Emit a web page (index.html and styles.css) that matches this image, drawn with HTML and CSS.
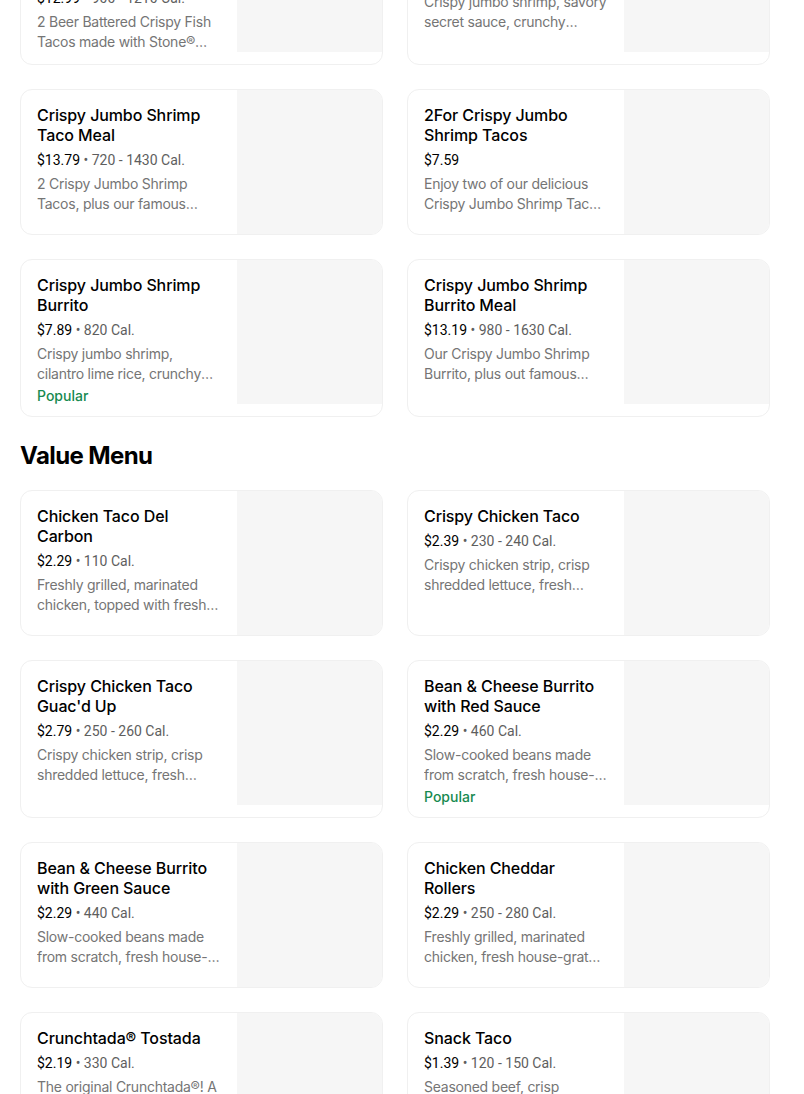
FILE: index.html
```html
<!DOCTYPE html>
<html lang="en">
<head>
<meta charset="utf-8">
<title>Menu</title>
<link rel="stylesheet" href="styles.css">
</head>
<body>
<main class="menu">
  <section class="section section-first">
    <div class="grid">
      <article class="card">
        <div class="info">
          <h3 class="title">2 Beer Battered Crispy Fish Tacos Meal with Stone® Beer</h3>
          <div class="meta"><span class="price">$12.99</span> • 900 - 1210 Cal.</div>
          <p class="desc">2 Beer Battered Crispy Fish Tacos made with Stone® Buenaveza Salt &amp; Lime Lager, plus chips.</p>
        </div>
        <div class="thumb"></div>
      </article>
      <article class="card">
        <div class="info">
          <h3 class="title">Crispy Jumbo Shrimp Taco</h3>
          <div class="meta"><span class="price">$3.79</span> • 360 Cal.</div>
          <p class="desc">Crispy jumbo shrimp, savory secret sauce, crunchy cabbage, fresh pico.</p>
        </div>
        <div class="thumb"></div>
      </article>
      <article class="card">
        <div class="info">
          <h3 class="title">Crispy Jumbo Shrimp Taco Meal</h3>
          <div class="meta"><span class="price">$13.79</span> • 720 - 1430 Cal.</div>
          <p class="desc">2 Crispy Jumbo Shrimp Tacos, plus our famous Chips&nbsp;and&nbsp;Guacamole and a regular drink.</p>
        </div>
        <div class="thumb"></div>
      </article>
      <article class="card">
        <div class="info">
          <h3 class="title">2For Crispy Jumbo Shrimp Tacos</h3>
          <div class="meta"><span class="price">$7.59</span></div>
          <p class="desc">Enjoy two of our delicious Crispy Jumbo Shrimp Tacos for one great price.</p>
        </div>
        <div class="thumb"></div>
      </article>
      <article class="card">
        <div class="info">
          <h3 class="title">Crispy Jumbo Shrimp Burrito</h3>
          <div class="meta"><span class="price">$7.89</span> • 820 Cal.</div>
          <p class="desc">Crispy jumbo shrimp, cilantro lime rice, crunchy cabbage and secret sauce.</p>
          <div class="badge">Popular</div>
        </div>
        <div class="thumb"></div>
      </article>
      <article class="card">
        <div class="info">
          <h3 class="title">Crispy Jumbo Shrimp Burrito Meal</h3>
          <div class="meta"><span class="price">$13.19</span> • 980 - 1630 Cal.</div>
          <p class="desc">Our Crispy Jumbo Shrimp Burrito, plus out famous Chips&nbsp;and&nbsp;Guacamole and a regular drink.</p>
        </div>
        <div class="thumb"></div>
      </article>
    </div>
  </section>

  <section class="section">
    <h2 class="section-title">Value Menu</h2>
    <div class="grid">
      <article class="card">
        <div class="info">
          <h3 class="title">Chicken Taco Del Carbon</h3>
          <div class="meta"><span class="price">$2.29</span> • 110 Cal.</div>
          <p class="desc">Freshly grilled, marinated chicken, topped with fresh pico de gallo in a warm tortilla.</p>
        </div>
        <div class="thumb"></div>
      </article>
      <article class="card">
        <div class="info">
          <h3 class="title">Crispy Chicken Taco</h3>
          <div class="meta"><span class="price">$2.39</span> • 230 - 240 Cal.</div>
          <p class="desc">Crispy chicken strip, crisp shredded lettuce, fresh pico&nbsp;de&nbsp;gallo and creamy sauce.</p>
        </div>
        <div class="thumb"></div>
      </article>
      <article class="card">
        <div class="info">
          <h3 class="title">Crispy Chicken Taco Guac'd Up</h3>
          <div class="meta"><span class="price">$2.79</span> • 250 - 260 Cal.</div>
          <p class="desc">Crispy chicken strip, crisp shredded lettuce, fresh guacamole and creamy sauce.</p>
        </div>
        <div class="thumb"></div>
      </article>
      <article class="card">
        <div class="info">
          <h3 class="title">Bean &amp; Cheese Burrito with Red Sauce</h3>
          <div class="meta"><span class="price">$2.29</span> • 460 Cal.</div>
          <p class="desc">Slow-cooked beans made from scratch, fresh house-grated cheese and red sauce.</p>
          <div class="badge">Popular</div>
        </div>
        <div class="thumb"></div>
      </article>
      <article class="card">
        <div class="info">
          <h3 class="title">Bean &amp; Cheese Burrito with Green Sauce</h3>
          <div class="meta"><span class="price">$2.29</span> • 440 Cal.</div>
          <p class="desc">Slow-cooked beans made from scratch, fresh house-grated cheese and green sauce.</p>
        </div>
        <div class="thumb"></div>
      </article>
      <article class="card">
        <div class="info">
          <h3 class="title">Chicken Cheddar Rollers</h3>
          <div class="meta"><span class="price">$2.29</span> • 250 - 280 Cal.</div>
          <p class="desc">Freshly grilled, marinated chicken, fresh house-grated cheddar rolled in a tortilla.</p>
        </div>
        <div class="thumb"></div>
      </article>
      <article class="card">
        <div class="info">
          <h3 class="title">Crunchtada® Tostada</h3>
          <div class="meta"><span class="price">$2.19</span> • 330 Cal.</div>
          <p class="desc">The original Crunchtada®! A crispy tostada shell topped with beans, cheese and lettuce.</p>
        </div>
        <div class="thumb"></div>
      </article>
      <article class="card">
        <div class="info">
          <h3 class="title">Snack Taco</h3>
          <div class="meta"><span class="price">$1.39</span> • 120 - 150 Cal.</div>
          <p class="desc">Seasoned beef, crisp shredded lettuce and cheese in a corn tortilla.</p>
        </div>
        <div class="thumb"></div>
      </article>
    </div>
  </section>
</main>
</body>
</html>
```

FILE: styles.css
```css
* { box-sizing: border-box; }

html, body {
  margin: 0;
  padding: 0;
  background: #ffffff;
}

body {
  font-family: Inter, "Liberation Sans", Arial, sans-serif;
  color: #000000;
  -webkit-font-smoothing: antialiased;
}

.menu {
  padding: 0 20px;
  margin-top: -93px;
}

.section-title {
  margin: 23px 0 18px;
  font-family: Inter, "Liberation Sans", sans-serif;
  font-size: 24px;
  line-height: 32px;
  font-weight: 700;
  letter-spacing: -0.6px;
  color: #000;
}

.grid {
  display: grid;
  grid-template-columns: 363px 363px;
  column-gap: 24px;
  row-gap: 24px;
}

.card {
  display: flex;
  align-items: flex-start;
  border: 1px solid #f0f0f0;
  border-radius: 12px;
  overflow: hidden;
  background: #fff;
}

.info {
  flex: 0 0 216px;
  padding: 15px 16px 12px;
  min-width: 0;
}

.title {
  margin: 0;
  font-size: 16px;
  line-height: 20px;
  font-weight: 500;
  letter-spacing: -0.1px;
  color: #000;
}

.meta {
  margin-top: 5px;
  font-family: Roboto, "Liberation Sans", sans-serif;
  font-size: 14px;
  line-height: 20px;
  color: #5e5e5e;
}

.price {
  color: #000;
}

.desc {
  margin: 4px 0 0;
  font-size: 14px;
  line-height: 20px;
  letter-spacing: -0.25px;
  color: #757575;
  display: -webkit-box;
  -webkit-line-clamp: 2;
  -webkit-box-orient: vertical;
  overflow: hidden;
}

.badge {
  margin-top: 4px;
  font-size: 14px;
  line-height: 16px;
  font-weight: 500;
  color: #178a50;
}

.thumb {
  flex: 1 1 auto;
  height: 144px;
  background: #f6f6f6;
}
```
